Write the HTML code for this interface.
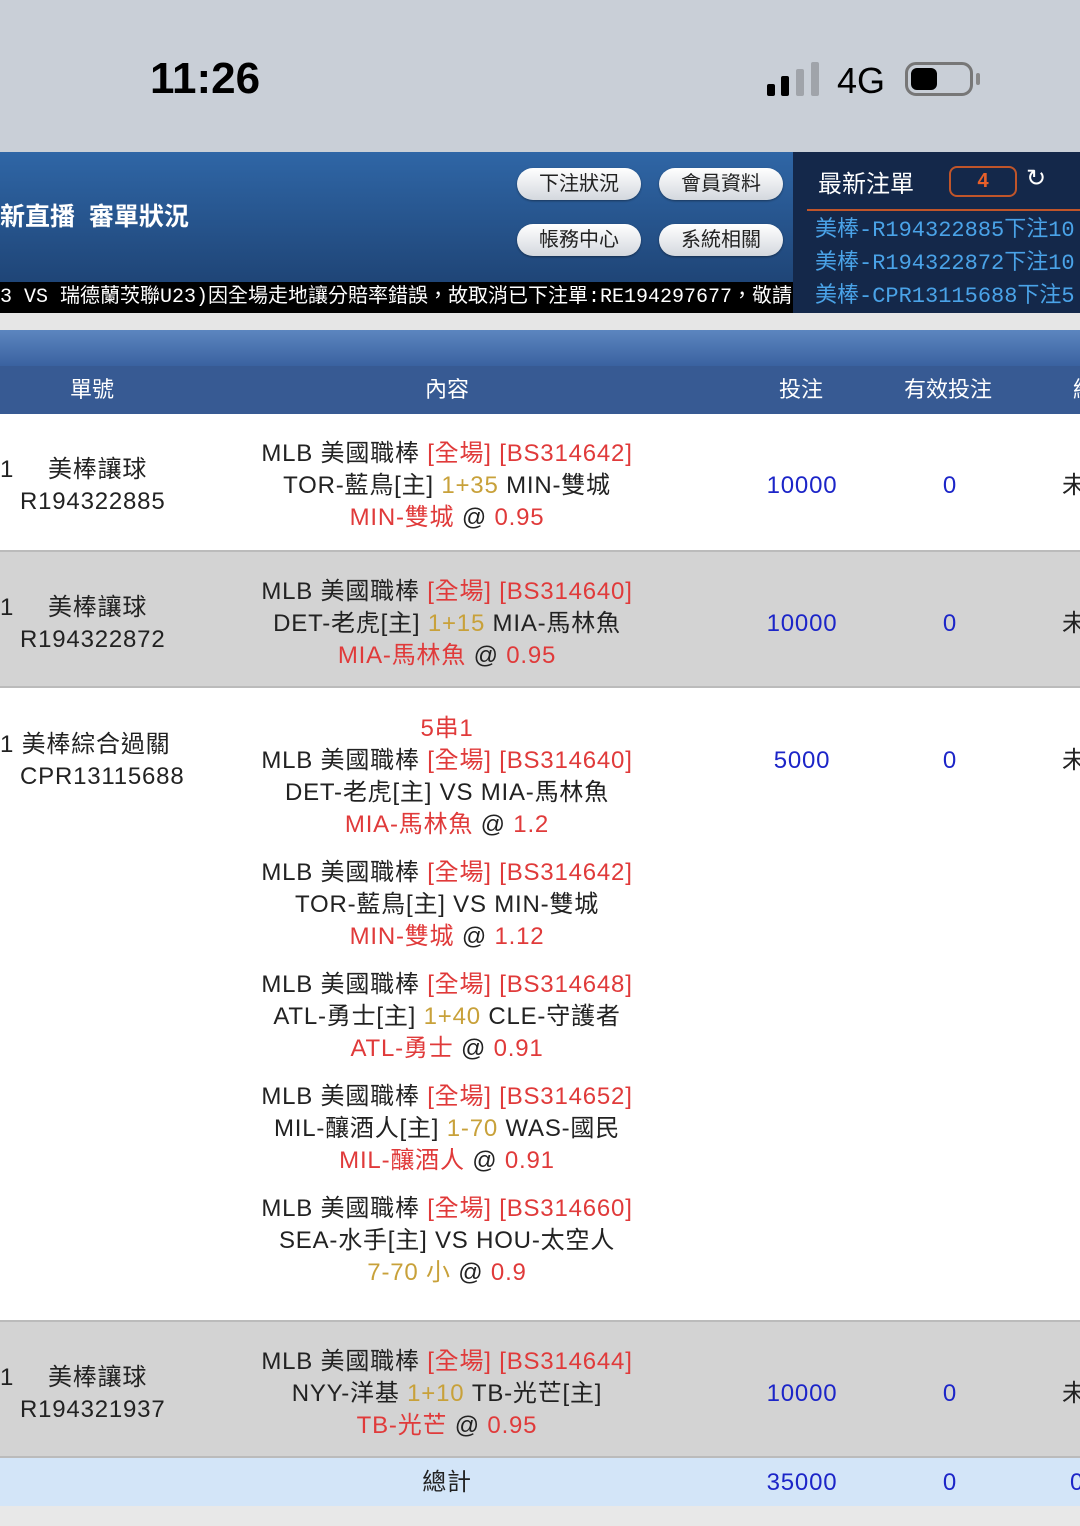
<!DOCTYPE html>
<html><head><meta charset="utf-8"><style>
*{margin:0;padding:0;box-sizing:border-box}
body{width:1080px;height:1526px;position:relative;overflow:hidden;background:#fff;font-family:"Liberation Sans","Noto Sans CJK TC",sans-serif;color:#222}
.a{position:absolute;white-space:nowrap}
.c{position:absolute;text-align:center;white-space:nowrap;font-size:24px;letter-spacing:0.8px;line-height:32px}
.l{position:absolute;white-space:nowrap;font-size:24px;letter-spacing:0.8px;line-height:32px}
.r{color:#e03a3a}.g{color:#c8a13a}.b{color:#1c25c8}
.btn{position:absolute;width:124px;height:32px;border-radius:16px;background:linear-gradient(#fff,#d4d8de);color:#222;font-size:20px;text-align:center;line-height:32px;box-shadow:0 1px 2px #0006}
</style></head><body>
<div class="a" style="left:0;top:0;width:1080px;height:152px;background:#c9cfd7"></div>
<div class="a" style="left:150px;top:54px;font-size:44px;font-weight:bold;color:#000">11:26</div>
<div class="a" style="left:767px;top:84px;width:8px;height:12px;background:#000;border-radius:2px"></div>
<div class="a" style="left:781px;top:76px;width:8px;height:20px;background:#000;border-radius:2px"></div>
<div class="a" style="left:796px;top:69px;width:8px;height:27px;background:#a0a4aa;border-radius:2px"></div>
<div class="a" style="left:811px;top:62px;width:8px;height:34px;background:#a0a4aa;border-radius:2px"></div>
<div class="a" style="left:837px;top:60px;font-size:36px;color:#000">4G</div>
<div class="a" style="left:905px;top:62px;width:68px;height:34px;border:3px solid #777;border-radius:11px"></div>
<div class="a" style="left:911px;top:68px;width:26px;height:22px;background:#000;border-radius:6px"></div>
<div class="a" style="left:976px;top:73px;width:4px;height:12px;background:#888;border-radius:2px"></div>

<div class="a" style="left:0;top:152px;width:793px;height:130px;background:linear-gradient(#2f66a6,#1f4577)"></div>
<div class="a" style="left:0;top:197px;font-size:25px;color:#fff;font-weight:bold">新直播&nbsp;&nbsp;審單狀況</div>
<div class="btn" style="left:517px;top:168px">下注狀況</div>
<div class="btn" style="left:659px;top:168px">會員資料</div>
<div class="btn" style="left:517px;top:224px">帳務中心</div>
<div class="btn" style="left:659px;top:224px">系統相關</div>
<div class="a" style="left:0;top:282px;width:793px;height:31px;background:#000;color:#fff;font-size:20px;line-height:31px;overflow:hidden;font-family:'Liberation Mono','Noto Sans CJK TC',monospace">3 VS 瑞德蘭茨聯U23)因全場走地讓分賠率錯誤，故取消已下注單:RE194297677，敬請</div>
<div class="a" style="left:793px;top:152px;width:287px;height:161px;background:#14284a;overflow:hidden">
 <div class="a" style="left:25px;top:12px;font-size:24px;color:#fff">最新注單</div>
 <div class="a" style="left:156px;top:14px;width:68px;height:31px;border:2px solid #c0552a;border-radius:8px;color:#e8602a;font-size:20px;font-weight:bold;text-align:center;line-height:27px">4</div>
 <div class="a" style="left:233px;top:12px;font-size:24px;color:#fff">↻</div>
 <div class="a" style="left:14px;top:57px;width:280px;height:2px;background:#c0552a"></div>
 <div class="a" style="left:22px;top:62px;font-size:22px;line-height:33px;color:#4aa3e8;font-family:'Liberation Mono','Noto Sans CJK TC',monospace">美棒-R194322885下注10<br>美棒-R194322872下注10<br>美棒-CPR13115688下注5</div>
</div>
<div class="a" style="left:0;top:313px;width:1080px;height:17px;background:#e6e6e6"></div>
<div class="a" style="left:0;top:330px;width:1080px;height:36px;background:linear-gradient(#5c86bf,#3a62a0)"></div>
<div class="a" style="left:0;top:366px;width:1080px;height:48px;background:#375a93;color:#fff;font-size:22px;line-height:48px">
 <span class="a" style="left:70px">單號</span><span class="a" style="left:425px">內容</span><span class="a" style="left:779px">投注</span><span class="a" style="left:904px">有效投注</span><span class="a" style="left:1073px">結</span></div>

<div class="a" style="left:0;top:550px;width:1080px;height:138px;background:#d3d3d3;border-top:2px solid #bbb;border-bottom:2px solid #bbb"></div>
<div class="a" style="left:0;top:1320px;width:1080px;height:138px;background:#d3d3d3;border-top:2px solid #bbb;border-bottom:2px solid #bbb"></div>
<div class="a" style="left:0;top:1458px;width:1080px;height:48px;background:#d3e5f8"></div>
<div class="a" style="left:0;top:1506px;width:1080px;height:20px;background:#e8e8e8"></div>

<!-- row1 -->
<div class="l" style="left:0;top:454px">1</div><div class="l" style="left:48px;top:454px">美棒讓球</div><div class="l" style="left:20px;top:486px">R194322885</div>
<div class="c" style="left:197px;width:500px;top:438px">MLB 美國職棒 <span class="r">[全場] [BS314642]</span><br>TOR-藍鳥[主] <span class="g">1+35</span> MIN-雙城<br><span class="r">MIN-雙城</span> @ <span class="r">0.95</span></div>
<div class="c b" style="left:740px;width:124px;top:470px">10000</div><div class="c b" style="left:900px;width:100px;top:470px">0</div><div class="c" style="left:1062px;top:470px">未</div>
<!-- row2 -->
<div class="l" style="left:0;top:592px">1</div><div class="l" style="left:48px;top:592px">美棒讓球</div><div class="l" style="left:20px;top:624px">R194322872</div>
<div class="c" style="left:197px;width:500px;top:576px">MLB 美國職棒 <span class="r">[全場] [BS314640]</span><br>DET-老虎[主] <span class="g">1+15</span> MIA-馬林魚<br><span class="r">MIA-馬林魚</span> @ <span class="r">0.95</span></div>
<div class="c b" style="left:740px;width:124px;top:608px">10000</div><div class="c b" style="left:900px;width:100px;top:608px">0</div><div class="c" style="left:1062px;top:608px">未</div>
<!-- row3 -->
<div class="l" style="left:0;top:729px">1 美棒綜合過關</div><div class="l" style="left:20px;top:761px">CPR13115688</div>
<div class="c" style="left:197px;width:500px;top:713px"><span class="r">5串1</span><br>MLB 美國職棒 <span class="r">[全場] [BS314640]</span><br>DET-老虎[主] VS MIA-馬林魚<br><span class="r">MIA-馬林魚</span> @ <span class="r">1.2</span></div>
<div class="c" style="left:197px;width:500px;top:857px">MLB 美國職棒 <span class="r">[全場] [BS314642]</span><br>TOR-藍鳥[主] VS MIN-雙城<br><span class="r">MIN-雙城</span> @ <span class="r">1.12</span></div>
<div class="c" style="left:197px;width:500px;top:969px">MLB 美國職棒 <span class="r">[全場] [BS314648]</span><br>ATL-勇士[主] <span class="g">1+40</span> CLE-守護者<br><span class="r">ATL-勇士</span> @ <span class="r">0.91</span></div>
<div class="c" style="left:197px;width:500px;top:1081px">MLB 美國職棒 <span class="r">[全場] [BS314652]</span><br>MIL-釀酒人[主] <span class="g">1-70</span> WAS-國民<br><span class="r">MIL-釀酒人</span> @ <span class="r">0.91</span></div>
<div class="c" style="left:197px;width:500px;top:1193px">MLB 美國職棒 <span class="r">[全場] [BS314660]</span><br>SEA-水手[主] VS HOU-太空人<br><span class="g">7-70 小</span> @ <span class="r">0.9</span></div>
<div class="c b" style="left:740px;width:124px;top:745px">5000</div><div class="c b" style="left:900px;width:100px;top:745px">0</div><div class="c" style="left:1062px;top:745px">未</div>
<!-- row4 -->
<div class="l" style="left:0;top:1362px">1</div><div class="l" style="left:48px;top:1362px">美棒讓球</div><div class="l" style="left:20px;top:1394px">R194321937</div>
<div class="c" style="left:197px;width:500px;top:1346px">MLB 美國職棒 <span class="r">[全場] [BS314644]</span><br>NYY-洋基 <span class="g">1+10</span> TB-光芒[主]<br><span class="r">TB-光芒</span> @ <span class="r">0.95</span></div>
<div class="c b" style="left:740px;width:124px;top:1378px">10000</div><div class="c b" style="left:900px;width:100px;top:1378px">0</div><div class="c" style="left:1062px;top:1378px">未</div>
<!-- total -->
<div class="c" style="left:197px;width:500px;top:1467px">總計</div>
<div class="c b" style="left:740px;width:124px;top:1467px">35000</div><div class="c b" style="left:900px;width:100px;top:1467px">0</div><div class="c b" style="left:1070px;top:1467px">0</div>
</body></html>
